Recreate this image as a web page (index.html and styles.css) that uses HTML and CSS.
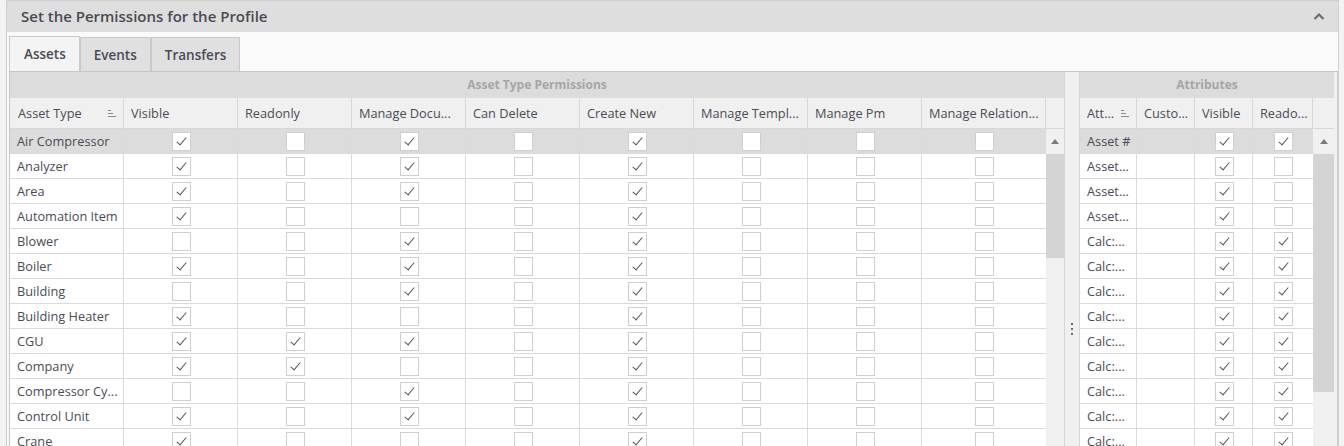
FILE: index.html
```html
<!DOCTYPE html>
<html>
<head>
<meta charset="utf-8">
<link rel="stylesheet" href="styles.css">
</head>
<body>
<div class="page">
 <div class="panel">
  <div class="panel-head">
   <span class="title">Set the Permissions for the Profile</span>
   <svg class="chev" width="12" height="8" viewBox="0 0 12 8"><polyline points="1.5,7 6,2.5 10.5,7" fill="none" stroke="#6b6b78" stroke-width="2.2"/></svg>
  </div>
  <div class="panel-body">
   <div class="tabs">
    <div class="tab active">Assets</div>
    <div class="tab">Events</div>
    <div class="tab">Transfers</div>
   </div>
   <div class="tab-content">
    <div class="grid gl">
     <div class="band">Asset Type Permissions</div>
     <div class="hrow">
      <div class="hc sortable"><span class="ht">Asset Type</span><i class="sort"></i></div>
      <div class="hc"><span class="ht">Visible</span></div>
      <div class="hc"><span class="ht">Readonly</span></div>
      <div class="hc"><span class="ht">Manage Docu...</span></div>
      <div class="hc"><span class="ht">Can Delete</span></div>
      <div class="hc"><span class="ht">Create New</span></div>
      <div class="hc"><span class="ht">Manage Templ...</span></div>
      <div class="hc"><span class="ht">Manage Pm</span></div>
      <div class="hc"><span class="ht">Manage Relation...</span></div>
      <div class="hc sb"></div>
     </div>
     <div class="body">
      <div class="rows">
       <div class="row sel"><div class="c t">Air Compressor</div><div class="c"><i class="cb on"></i></div><div class="c"><i class="cb"></i></div><div class="c"><i class="cb on"></i></div><div class="c"><i class="cb"></i></div><div class="c"><i class="cb on"></i></div><div class="c"><i class="cb"></i></div><div class="c"><i class="cb"></i></div><div class="c"><i class="cb"></i></div></div>
       <div class="row"><div class="c t">Analyzer</div><div class="c"><i class="cb on"></i></div><div class="c"><i class="cb"></i></div><div class="c"><i class="cb on"></i></div><div class="c"><i class="cb"></i></div><div class="c"><i class="cb on"></i></div><div class="c"><i class="cb"></i></div><div class="c"><i class="cb"></i></div><div class="c"><i class="cb"></i></div></div>
       <div class="row"><div class="c t">Area</div><div class="c"><i class="cb on"></i></div><div class="c"><i class="cb"></i></div><div class="c"><i class="cb on"></i></div><div class="c"><i class="cb"></i></div><div class="c"><i class="cb on"></i></div><div class="c"><i class="cb"></i></div><div class="c"><i class="cb"></i></div><div class="c"><i class="cb"></i></div></div>
       <div class="row"><div class="c t">Automation Item</div><div class="c"><i class="cb on"></i></div><div class="c"><i class="cb"></i></div><div class="c"><i class="cb"></i></div><div class="c"><i class="cb"></i></div><div class="c"><i class="cb on"></i></div><div class="c"><i class="cb"></i></div><div class="c"><i class="cb"></i></div><div class="c"><i class="cb"></i></div></div>
       <div class="row"><div class="c t">Blower</div><div class="c"><i class="cb"></i></div><div class="c"><i class="cb"></i></div><div class="c"><i class="cb on"></i></div><div class="c"><i class="cb"></i></div><div class="c"><i class="cb on"></i></div><div class="c"><i class="cb"></i></div><div class="c"><i class="cb"></i></div><div class="c"><i class="cb"></i></div></div>
       <div class="row"><div class="c t">Boiler</div><div class="c"><i class="cb on"></i></div><div class="c"><i class="cb"></i></div><div class="c"><i class="cb on"></i></div><div class="c"><i class="cb"></i></div><div class="c"><i class="cb on"></i></div><div class="c"><i class="cb"></i></div><div class="c"><i class="cb"></i></div><div class="c"><i class="cb"></i></div></div>
       <div class="row"><div class="c t">Building</div><div class="c"><i class="cb"></i></div><div class="c"><i class="cb"></i></div><div class="c"><i class="cb on"></i></div><div class="c"><i class="cb"></i></div><div class="c"><i class="cb on"></i></div><div class="c"><i class="cb"></i></div><div class="c"><i class="cb"></i></div><div class="c"><i class="cb"></i></div></div>
       <div class="row"><div class="c t">Building Heater</div><div class="c"><i class="cb on"></i></div><div class="c"><i class="cb"></i></div><div class="c"><i class="cb"></i></div><div class="c"><i class="cb"></i></div><div class="c"><i class="cb on"></i></div><div class="c"><i class="cb"></i></div><div class="c"><i class="cb"></i></div><div class="c"><i class="cb"></i></div></div>
       <div class="row"><div class="c t">CGU</div><div class="c"><i class="cb on"></i></div><div class="c"><i class="cb on"></i></div><div class="c"><i class="cb on"></i></div><div class="c"><i class="cb"></i></div><div class="c"><i class="cb on"></i></div><div class="c"><i class="cb"></i></div><div class="c"><i class="cb"></i></div><div class="c"><i class="cb"></i></div></div>
       <div class="row"><div class="c t">Company</div><div class="c"><i class="cb on"></i></div><div class="c"><i class="cb on"></i></div><div class="c"><i class="cb"></i></div><div class="c"><i class="cb"></i></div><div class="c"><i class="cb on"></i></div><div class="c"><i class="cb"></i></div><div class="c"><i class="cb"></i></div><div class="c"><i class="cb"></i></div></div>
       <div class="row"><div class="c t">Compressor Cy...</div><div class="c"><i class="cb"></i></div><div class="c"><i class="cb"></i></div><div class="c"><i class="cb on"></i></div><div class="c"><i class="cb"></i></div><div class="c"><i class="cb on"></i></div><div class="c"><i class="cb"></i></div><div class="c"><i class="cb"></i></div><div class="c"><i class="cb"></i></div></div>
       <div class="row"><div class="c t">Control Unit</div><div class="c"><i class="cb on"></i></div><div class="c"><i class="cb"></i></div><div class="c"><i class="cb on"></i></div><div class="c"><i class="cb"></i></div><div class="c"><i class="cb on"></i></div><div class="c"><i class="cb"></i></div><div class="c"><i class="cb"></i></div><div class="c"><i class="cb"></i></div></div>
       <div class="row"><div class="c t">Crane</div><div class="c"><i class="cb on"></i></div><div class="c"><i class="cb"></i></div><div class="c"><i class="cb"></i></div><div class="c"><i class="cb"></i></div><div class="c"><i class="cb on"></i></div><div class="c"><i class="cb"></i></div><div class="c"><i class="cb"></i></div><div class="c"><i class="cb"></i></div></div>
      </div>
      <div class="scroll">
       <div class="sbtn"><i class="tri"></i></div>
       <div class="thumb tl"></div>
      </div>
     </div>
    </div>
    <div class="splitter"><span class="dots"><i></i><i></i><i></i></span></div>
    <div class="grid gr">
     <div class="band">Attributes</div>
     <div class="hrow">
      <div class="hc sortable"><span class="ht">Att...</span><i class="sort"></i></div>
      <div class="hc"><span class="ht">Custo...</span></div>
      <div class="hc"><span class="ht">Visible</span></div>
      <div class="hc"><span class="ht">Reado...</span></div>
      <div class="hc sb"></div>
     </div>
     <div class="body">
      <div class="rows">
       <div class="row sel"><div class="c t">Asset #</div><div class="c"></div><div class="c"><i class="cb on"></i></div><div class="c"><i class="cb on"></i></div></div>
       <div class="row"><div class="c t">Asset...</div><div class="c"></div><div class="c"><i class="cb on"></i></div><div class="c"><i class="cb"></i></div></div>
       <div class="row"><div class="c t">Asset...</div><div class="c"></div><div class="c"><i class="cb on"></i></div><div class="c"><i class="cb"></i></div></div>
       <div class="row"><div class="c t">Asset...</div><div class="c"></div><div class="c"><i class="cb on"></i></div><div class="c"><i class="cb"></i></div></div>
       <div class="row"><div class="c t">Calc:...</div><div class="c"></div><div class="c"><i class="cb on"></i></div><div class="c"><i class="cb on"></i></div></div>
       <div class="row"><div class="c t">Calc:...</div><div class="c"></div><div class="c"><i class="cb on"></i></div><div class="c"><i class="cb on"></i></div></div>
       <div class="row"><div class="c t">Calc:...</div><div class="c"></div><div class="c"><i class="cb on"></i></div><div class="c"><i class="cb on"></i></div></div>
       <div class="row"><div class="c t">Calc:...</div><div class="c"></div><div class="c"><i class="cb on"></i></div><div class="c"><i class="cb on"></i></div></div>
       <div class="row"><div class="c t">Calc:...</div><div class="c"></div><div class="c"><i class="cb on"></i></div><div class="c"><i class="cb on"></i></div></div>
       <div class="row"><div class="c t">Calc:...</div><div class="c"></div><div class="c"><i class="cb on"></i></div><div class="c"><i class="cb on"></i></div></div>
       <div class="row"><div class="c t">Calc:...</div><div class="c"></div><div class="c"><i class="cb on"></i></div><div class="c"><i class="cb on"></i></div></div>
       <div class="row"><div class="c t">Calc:...</div><div class="c"></div><div class="c"><i class="cb on"></i></div><div class="c"><i class="cb on"></i></div></div>
       <div class="row"><div class="c t">Calc:...</div><div class="c"></div><div class="c"><i class="cb on"></i></div><div class="c"><i class="cb on"></i></div></div>
      </div>
      <div class="scroll">
       <div class="sbtn"><i class="tri"></i></div>
       <div class="thumb tr"></div>
      </div>
     </div>
    </div>
   </div>
  </div>
 </div>
</div>
</body>
</html>
```
FILE: styles.css
```css
* { box-sizing: border-box; }
html, body { margin: 0; padding: 0; }
body {
  width: 1344px;
  height: 446px;
  overflow: hidden;
  background: #f3f3f3;
  font-family: "Open Sans", "Segoe UI", sans-serif;
  color: #4b4b57;
}
.page { padding: 0 5px 0 6px; height: 446px; }
.panel {
  height: 100%;
  border: 1px solid #cfcfcf;
  border-bottom: none;
  background: #fafafa;
  display: flex;
  flex-direction: column;
}
.panel-head {
  height: 31px;
  flex: none;
  background: #dedede;
  display: flex;
  align-items: center;
  justify-content: space-between;
  padding: 0 13px 1px 14px;
}
.title { font-size: 15px; font-weight: 600; color: #4a4a56; }
.chev { display: block; margin-top: -1px; }
.panel-body {
  flex: 1;
  padding: 4px 0 0 2px;
  display: flex;
  flex-direction: column;
  min-height: 0;
}
.tabs { display: flex; height: 35px; flex: none; align-items: flex-end; }
.tab {
  height: 34px;
  padding: 0 13px;
  line-height: 34px;
  font-size: 13.5px;
  font-weight: 600;
  color: #4a4a56;
  background: #e0e0e0;
  border: 1px solid #cacaca;
  border-bottom: none;
}
.tab.active { background: #f4f4f4; height: 35px; line-height: 35px; padding: 0 13px 0 14px; }
.tab-content {
  flex: 1;
  min-height: 0;
  border-top: 1px solid #c6c6c6;
  border-left: 1px solid #c6c6c6;
  border-right: 1px solid #d0d0d0;
  background: #f0f0f0;
  display: flex;
}
.grid { display: flex; flex-direction: column; background: #fff; }
.gl { width: 1054px; }
.gr { width: 254px; }
.band {
  height: 26px;
  line-height: 26px;
  background: #dcdcdc;
  color: #a6a6a6;
  font-weight: 700;
  font-size: 12px;
  text-align: center;
}
.hrow {
  display: grid;
  height: 31px;
  background: #f0f0f0;
  border-bottom: 1px solid #d8d8d8;
}
.gl .hrow { grid-template-columns: repeat(8, 114px) 124px 18px; }
.gr .hrow { grid-template-columns: 57px 58px 58px 60px 21px; }
.hc {
  border-right: 1px solid #d8d8d8;
  padding: 0 0 0 7px;
  font-size: 12.75px;
  white-space: nowrap;
  overflow: hidden;
  display: flex;
  align-items: center;
  color: #4b4b57;
}
.gl .hc:first-child { padding-left: 8px; }
.hc.sb { border-right: none; }
.sortable { justify-content: space-between; padding-right: 7px; }
.sort {
  width: 8px;
  height: 7px;
  background:
    linear-gradient(#8a8a94, #8a8a94) 0 0 / 3px 1px no-repeat,
    linear-gradient(#8a8a94, #8a8a94) 0 3px / 5px 1px no-repeat,
    linear-gradient(#8a8a94, #8a8a94) 0 6px / 8px 1px no-repeat;
}
.body { flex: 1; display: flex; min-height: 0; overflow: hidden; }
.rows { flex: 1; }
.row {
  display: grid;
  height: 25px;
  border-bottom: 1px solid #dadada;
  background: #fff;
}
.gl .row { grid-template-columns: repeat(8, 114px) 124px; }
.gr .row { grid-template-columns: 57px 58px 58px 60px; }
.row.sel { background: #dcdcdc; }
.c {
  border-right: 1px solid #dadada;
  display: flex;
  align-items: center;
  justify-content: center;
}
.gl .c:last-child, .gr .c:last-child { border-right: none; }
.c.t {
  justify-content: flex-start;
  padding-left: 7px;
  font-size: 12.75px;
  white-space: nowrap;
}
.cb {
  width: 19px;
  height: 19px;
  border: 1px solid #cfcfcf;
  background: #fff;
  position: relative;
  margin-left: 1px;
}
.cb.on::after {
  content: "";
  position: absolute;
  left: 6px;
  top: 2px;
  width: 4px;
  height: 9px;
  border-right: 1px solid #55555f;
  border-bottom: 1px solid #55555f;
  transform: rotate(40deg);
}
.scroll {
  width: 18px;
  background: #f0f0f0;
  display: flex;
  flex-direction: column;
}
.gr .scroll { width: 21px; }
.sbtn {
  height: 25px;
  display: flex;
  align-items: center;
  justify-content: center;
}
.tri {
  width: 0;
  height: 0;
  border-left: 4px solid transparent;
  border-right: 4px solid transparent;
  border-bottom: 5px solid #7a7a82;
}
.thumb { background: #d4d4d4; }
.tl { height: 104px; }
.tr { height: 238px; }
.splitter {
  width: 16px;
  border-left: 1px solid #d6d6d6;
  border-right: 1px solid #d6d6d6;
  background: #f0f0f0;
  display: flex;
  align-items: center;
  justify-content: center;
  padding-top: 140px;
}
.dots { display: flex; flex-direction: column; gap: 3px; }
.dots i { width: 2px; height: 2px; background: #6a6a74; display: block; }
```
